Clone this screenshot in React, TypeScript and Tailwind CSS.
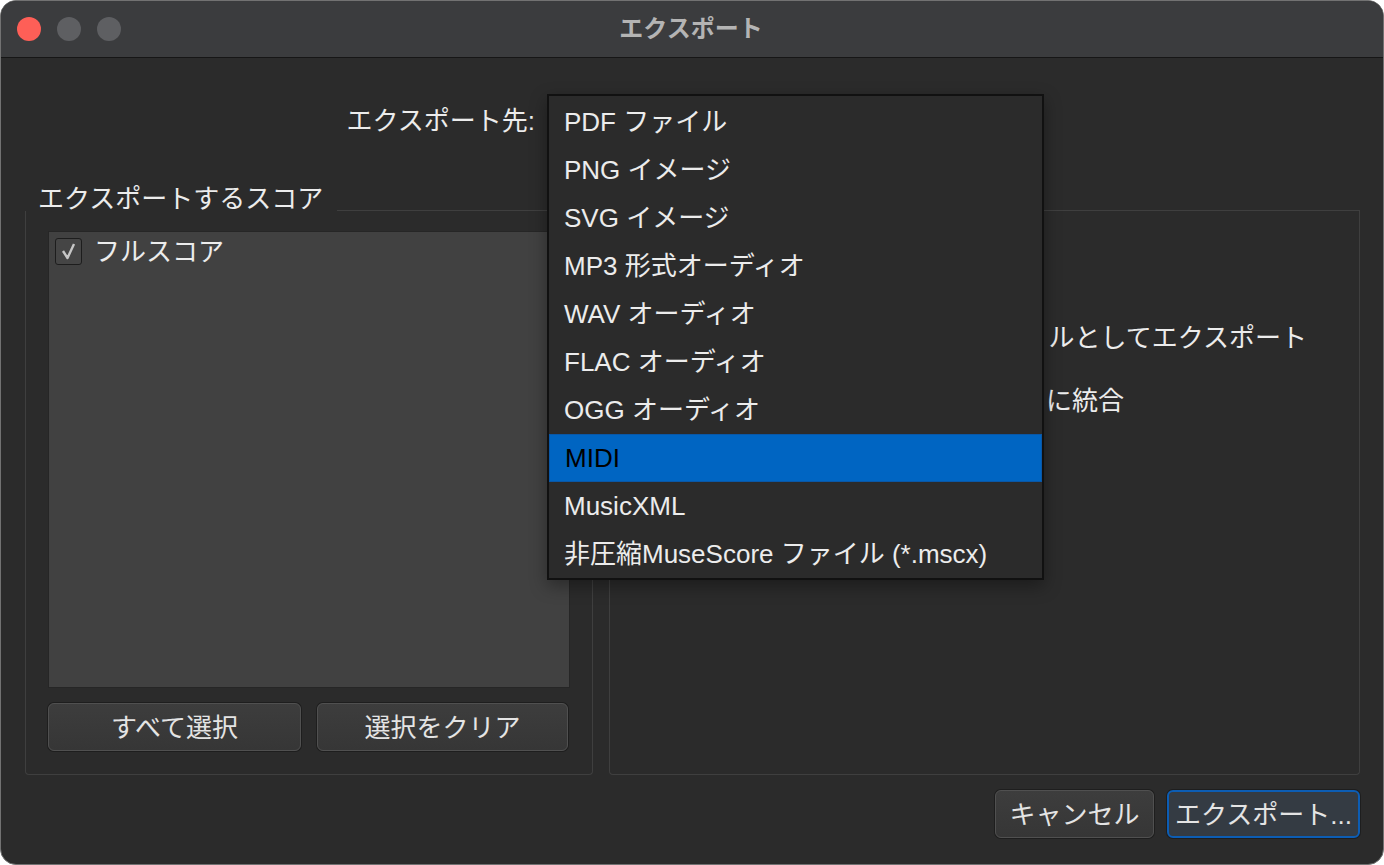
import React from "react";

const formats = [
  "PDF ファイル",
  "PNG イメージ",
  "SVG イメージ",
  "MP3 形式オーディオ",
  "WAV オーディオ",
  "FLAC オーディオ",
  "OGG オーディオ",
  "MIDI",
  "MusicXML",
  "非圧縮MuseScore ファイル (*.mscx)",
];

const DialogButton = ({ label, width, primary }: { label: string; width: string; primary?: boolean }) => (
  <button
    className={`${width} h-[48px] rounded-[6px] pt-[2px] text-[26px] leading-none text-[#e4e4e4] shadow-[0_0_0_1px_#1e1e1e] ${
      primary
        ? "border-2 border-[#0c5db4] bg-[#343b43]"
        : "border border-[#505050] bg-gradient-to-b from-[#3d3d3d] to-[#363636]"
    }`}
  >
    {label}
  </button>
);

const GroupHeader = ({ title }: { title?: string }) => (
  <div className="flex h-[31px] shrink-0">
    {title && <div className="w-[312px] pl-[13px] pt-[4px] leading-[31px] text-[26px] text-[#ececec]">{title}</div>}
    <div className="flex-1 self-end h-px bg-[#3f3f3f]" />
  </div>
);

export default function App() {
  return (
    <div className="w-[1384px] h-[865px] bg-white [font-family:'Liberation_Sans','Noto_Sans_CJK_JP',sans-serif]">
      <div className="relative flex h-full flex-col overflow-hidden rounded-[16px] border border-[#727272] bg-[#2b2b2b]">
        {/* title bar */}
        <div className="relative flex h-[57px] shrink-0 items-center border-b border-[#161616] bg-[#3b3c3e]">
          <div className="flex gap-[16px] pl-[16px]">
            <span className="h-[24px] w-[24px] rounded-full bg-[#fe5f57]" />
            <span className="h-[24px] w-[24px] rounded-full bg-[#5e5f62]" />
            <span className="h-[24px] w-[24px] rounded-full bg-[#5e5f62]" />
          </div>
          <div className="flex-1 pr-[122px] text-center text-[24px] font-bold text-[#b4b4b4]">エクスポート</div>
        </div>

        <div className="flex flex-1 flex-col pl-[24px] pr-[23px]">
          <div className="mt-[39px] flex h-[48px] items-center">
            <div className="w-[510px] text-right text-[26px] text-[#ececec]">エクスポート先:</div>
            <div className="ml-[12px] w-[496px]" />
          </div>

          <div className="mt-[35px] flex h-[595px] gap-[16px]">
            {/* scores group */}
            <div className="flex w-[568px] flex-col">
              <GroupHeader title="エクスポートするスコア" />
              <div className="flex flex-1 flex-col rounded-b-[4px] border-x border-b border-[#3f3f3f] px-[22px] pb-[23px] pt-[20px]">
                <div className="flex-1 border border-[#262626] bg-[#414141]">
                  <div className="flex h-[36px] items-center gap-[12px] pl-[6px] pt-[2px]">
                    <span className="flex h-[27px] w-[27px] items-center justify-center rounded-[3px] border border-[#1d1d1d] bg-[#454545]">
                      <svg width="20" height="20" viewBox="0 0 20 20">
                        <polyline points="4,10 8.5,17 15,3" fill="none" stroke="#c6c6c6" strokeWidth="2.4" strokeLinejoin="round" />
                      </svg>
                    </span>
                    <span className="pt-[3px] text-[26px] text-[#ececec]">フルスコア</span>
                  </div>
                </div>
                <div className="mt-[15px] flex gap-[16px]">
                  <DialogButton label="すべて選択" width="w-[253px]" />
                  <DialogButton label="選択をクリア" width="w-[251px]" />
                </div>
              </div>
            </div>

            {/* options group, mostly covered by the popup */}
            <div className="flex flex-1 flex-col">
              <GroupHeader />
              <div className="flex-1 rounded-b-[4px] border-x border-b border-[#3f3f3f]">
                <div className="mt-[103px] flex h-[48px] w-[697px] items-center justify-end">
                  <span className="whitespace-nowrap text-[26px] text-[#ececec]">ルとしてエクスポート</span>
                </div>
                <div className="mt-[15px] flex h-[48px] w-[514px] items-center justify-end">
                  <span className="whitespace-nowrap text-[26px] text-[#ececec]">に統合</span>
                </div>
              </div>
            </div>
          </div>

          <div className="mt-[15px] flex h-[48px] justify-end gap-[13px]">
            <DialogButton label="キャンセル" width="w-[159px]" />
            <DialogButton label="エクスポート..." width="w-[193px]" primary />
          </div>
        </div>

        {/* open combo box popup */}
        <div className="absolute left-[546px] top-[93px] w-[497px] border-2 border-[#111111] bg-[#2b2b2b] pt-[2px] shadow-[0_6px_16px_rgba(0,0,0,0.35)]">
          {formats.map((f) => (
            <div
              key={f}
              className={`flex h-[48px] items-center pl-[15px] pt-[1px] text-[26px] ${
                f === "MIDI" ? "border border-[#0a57a6] bg-[#0065c2] pl-[14px] text-black" : "text-[#ececec]"
              }`}
            >
              {f}
            </div>
          ))}
        </div>
      </div>
    </div>
  );
}
